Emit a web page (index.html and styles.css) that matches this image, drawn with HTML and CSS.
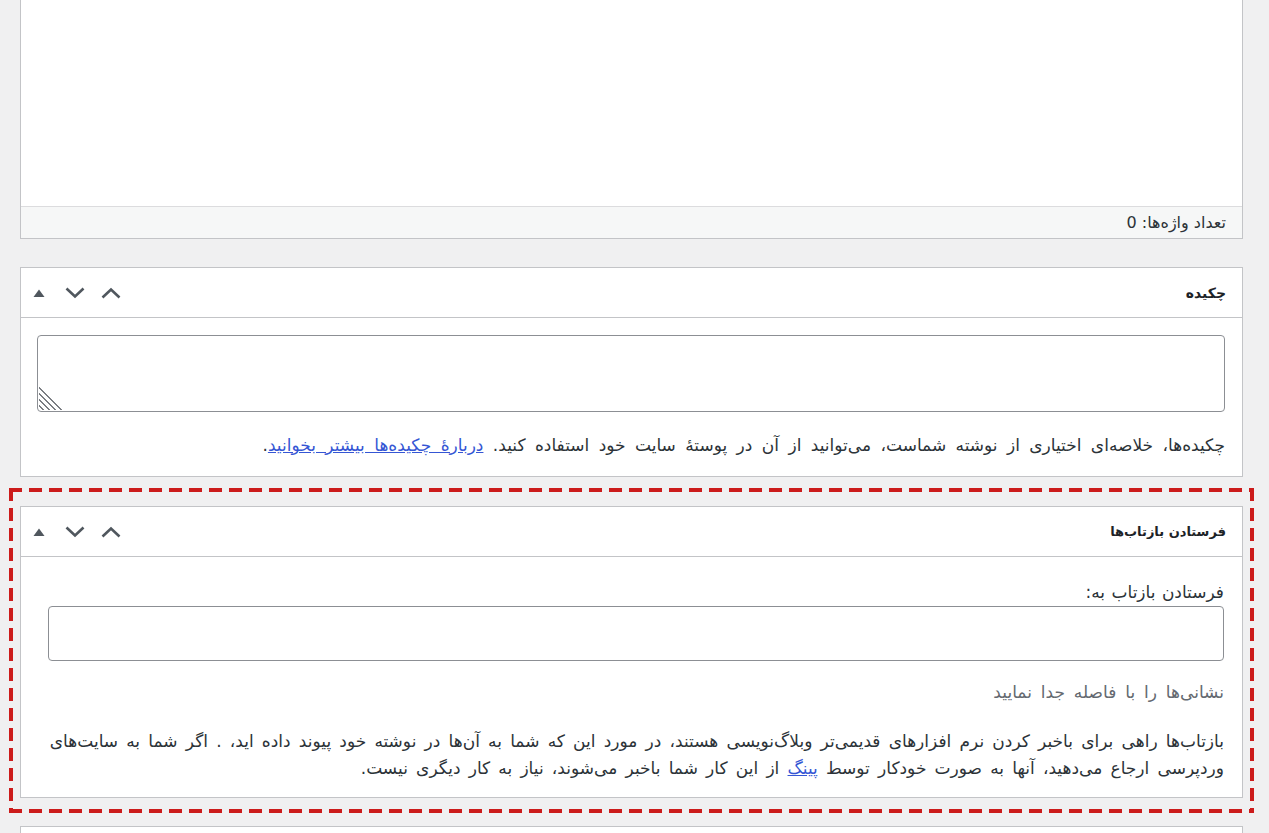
FILE: index.html
```html
<!DOCTYPE html>
<html lang="fa" dir="rtl">
<head>
<meta charset="utf-8">
<title>ویرایش نوشته</title>
<link rel="stylesheet" href="styles.css">
</head>
<body>
<div class="page">
  <div class="panel editor">
    <div class="editor-area"></div>
    <div class="status-bar">تعداد واژه‌ها: 0</div>
  </div>

  <div class="panel box excerpt">
    <div class="box-head">
      <h2 class="box-title">چکیده</h2>
      <div class="box-actions">
        <button class="icon-btn" aria-label="بالا بردن">
          <svg width="20" height="12" viewBox="0 0 20 12"><path d="M1.5 10.5 L10 2.5 L18.5 10.5" fill="none" stroke="#50575e" stroke-width="2.6"/></svg>
        </button>
        <button class="icon-btn" aria-label="پایین بردن">
          <svg width="20" height="12" viewBox="0 0 20 12"><path d="M1.5 1.5 L10 9.5 L18.5 1.5" fill="none" stroke="#50575e" stroke-width="2.6"/></svg>
        </button>
        <button class="icon-btn" aria-label="باز و بسته کردن">
          <svg width="12" height="8" viewBox="0 0 12 8"><path d="M0.5 8 L6 0.5 L11.5 8 Z" fill="#50575e"/></svg>
        </button>
      </div>
    </div>
    <div class="box-body">
      <div class="textarea">
        <span class="grip"></span>
      </div>
      <p class="excerpt-note">چکیده‌ها، خلاصه‌ای اختیاری از نوشته شماست، می‌توانید از آن در پوستهٔ سایت خود استفاده کنید. <a href="#">دربارهٔ چکیده‌ها بیشتر بخوانید</a>.</p>
    </div>
  </div>

  <div class="highlight">
    <div class="panel box trackbacks">
      <div class="box-head">
        <h2 class="box-title">فرستادن بازتاب‌ها</h2>
        <div class="box-actions">
          <button class="icon-btn" aria-label="بالا بردن">
            <svg width="20" height="12" viewBox="0 0 20 12"><path d="M1.5 10.5 L10 2.5 L18.5 10.5" fill="none" stroke="#50575e" stroke-width="2.6"/></svg>
          </button>
          <button class="icon-btn" aria-label="پایین بردن">
            <svg width="20" height="12" viewBox="0 0 20 12"><path d="M1.5 1.5 L10 9.5 L18.5 1.5" fill="none" stroke="#50575e" stroke-width="2.6"/></svg>
          </button>
          <button class="icon-btn" aria-label="باز و بسته کردن">
            <svg width="12" height="8" viewBox="0 0 12 8"><path d="M0.5 8 L6 0.5 L11.5 8 Z" fill="#50575e"/></svg>
          </button>
        </div>
      </div>
      <div class="box-body tb-body">
        <label class="tb-label">فرستادن بازتاب به:</label>
        <div class="tb-input"></div>
        <p class="hint">نشانی‌ها را با فاصله جدا نمایید</p>
        <p class="tb-text"><span class="line">بازتاب‌ها راهی برای باخبر کردن نرم افزارهای قدیمی‌تر وبلاگ‌نویسی هستند، در مورد این که شما به آن‌ها در نوشته خود پیوند داده اید، . اگر شما به سایت‌های</span><span class="line">وردپرسی ارجاع می‌دهید، آنها به صورت خودکار توسط <a href="#">پینگ</a> از این کار شما باخبر می‌شوند، نیاز به کار دیگری نیست.</span></p>
      </div>
    </div>
  </div>

  <div class="panel next"></div>
</div>
</body>
</html>
```

FILE: styles.css
```css
html, body {
  margin: 0;
  padding: 0;
  background: #f0f0f1;
  height: 833px;
  overflow: hidden;
}

body {
  font-family: "DejaVu Sans", sans-serif;
  font-size: 17px;
  color: #1d2327;
}

.page {
  display: flex;
  flex-direction: column;
  margin: 0 26px 0 20px;
}

.panel {
  background: #fff;
  border: 1px solid #c3c4c7;
  box-sizing: border-box;
}

.editor {
  border-top: none;
}

.editor-area {
  height: 206px;
}

.status-bar {
  height: 32px;
  box-sizing: border-box;
  border-top: 1px solid #dcdcde;
  background: #f6f7f7;
  padding: 0 16px;
  display: flex;
  align-items: center;
  font-size: 16px;
  color: #2c3338;
}

.excerpt {
  margin-top: 28px;
}

.box-head {
  height: 50px;
  box-sizing: border-box;
  border-bottom: 1px solid #c3c4c7;
  display: flex;
  align-items: center;
  justify-content: space-between;
}

.box-title {
  margin: 0;
  padding-right: 16px;
  font-size: 14px;
  font-weight: bold;
  color: #1d2327;
}

.trackbacks .box-title {
  font-size: 13px;
}

.box-actions {
  display: flex;
  align-items: center;
}

.icon-btn {
  width: 36px;
  height: 36px;
  padding: 0;
  border: none;
  background: transparent;
  display: flex;
  align-items: center;
  justify-content: center;
}

.box-body {
  padding: 17px 17px 17px 16px;
}

.textarea {
  position: relative;
  height: 77px;
  box-sizing: border-box;
  border: 1px solid #8c8f94;
  border-radius: 4px;
  background: #fff;
}

.grip {
  position: absolute;
  left: 1px;
  bottom: 1px;
  width: 25px;
  height: 25px;
  background: repeating-linear-gradient(45deg, transparent 0 2.6px, #7b7e83 2.6px 4.1px);
  clip-path: polygon(0 0, 100% 100%, 0 100%);
}

.excerpt-note {
  margin: 20px 0 0 0;
  line-height: 27px;
  word-spacing: 4px;
  color: #2c3338;
}

a {
  color: #3556d4;
  text-decoration: underline;
}

.highlight {
  margin: 11px -11px 0 -11px;
  padding: 18px 11px 15px 11px;
  background:
    repeating-linear-gradient(90deg, #cc1b1b 0 13px, transparent 13px 20px) left top / 100% 4px no-repeat,
    repeating-linear-gradient(90deg, #cc1b1b 0 13px, transparent 13px 20px) left bottom / 100% 4px no-repeat,
    repeating-linear-gradient(180deg, #cc1b1b 0 13px, transparent 13px 20px) left top / 4px 100% no-repeat,
    repeating-linear-gradient(180deg, #cc1b1b 0 13px, transparent 13px 20px) right top / 4px 100% no-repeat;
}

.tb-body {
  padding: 22px 18px 15px 17px;
  display: flex;
  flex-direction: column;
}

.tb-label {
  line-height: 27px;
  word-spacing: 1px;
  color: #2c3338;
}

.tb-input {
  height: 55px;
  box-sizing: border-box;
  margin-left: 10px;
  border: 1px solid #8c8f94;
  border-radius: 4px;
}

.hint {
  margin: 18px 0 0 0;
  line-height: 27px;
  word-spacing: 3.5px;
  color: #646970;
}

.tb-text {
  margin: 22px 0 0 0;
  line-height: 27px;
  word-spacing: 2.8px;
  color: #2c3338;
}

.tb-text .line {
  display: block;
  white-space: nowrap;
}

.next {
  margin-top: 13px;
  height: 40px;
}
```
